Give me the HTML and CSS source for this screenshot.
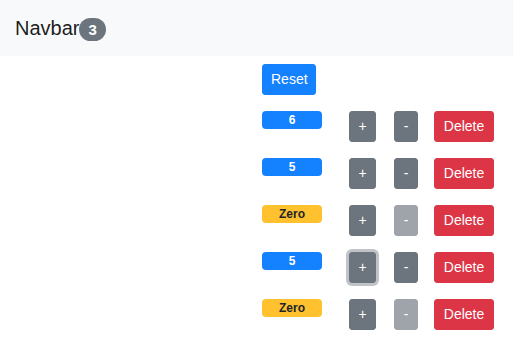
FILE: index.html
```html
<!DOCTYPE html>
<html lang="en">
  <head>
    <meta charset="UTF-8" />
    <meta name="viewport" content="width=device-width, initial-scale=1.0" />
    <title>Counters</title>
    <link rel="stylesheet" href="styles.css">
  </head>
  <body>
    <nav class="navbar">
      <a class="navbar-brand" href="#">Navbar<span class="pill">3</span></a>
    </nav>

    <main class="counters">
      <button class="btn btn-primary btn-reset">Reset</button>

      <div class="counter">
        <div class="counter-value"><span class="badge badge-primary">6</span></div>
        <button class="btn btn-secondary btn-inc">+</button>
        <button class="btn btn-secondary btn-dec">-</button>
        <button class="btn btn-danger btn-del">Delete</button>
      </div>
      <div class="counter">
        <div class="counter-value"><span class="badge badge-primary">5</span></div>
        <button class="btn btn-secondary btn-inc">+</button>
        <button class="btn btn-secondary btn-dec">-</button>
        <button class="btn btn-danger btn-del">Delete</button>
      </div>
      <div class="counter">
        <div class="counter-value"><span class="badge badge-warning">Zero</span></div>
        <button class="btn btn-secondary btn-inc">+</button>
        <button class="btn btn-secondary btn-dec" disabled>-</button>
        <button class="btn btn-danger btn-del">Delete</button>
      </div>
      <div class="counter">
        <div class="counter-value"><span class="badge badge-primary">5</span></div>
        <button class="btn btn-secondary btn-inc focus">+</button>
        <button class="btn btn-secondary btn-dec">-</button>
        <button class="btn btn-danger btn-del">Delete</button>
      </div>
      <div class="counter">
        <div class="counter-value"><span class="badge badge-warning">Zero</span></div>
        <button class="btn btn-secondary btn-inc">+</button>
        <button class="btn btn-secondary btn-dec" disabled>-</button>
        <button class="btn btn-danger btn-del">Delete</button>
      </div>
    </main>
  </body>
</html>
```

FILE: styles.css
```css
:root {
  --primary: #1481ff;
  --secondary: #6c757d;
  --danger: #dc3545;
  --warning: #ffc22e;
  --dark: #212529;
  --light-bg: #f8f9fa;
}
body {
  font-family: "Liberation Sans", Arial, sans-serif;
  margin: 0;
  color: var(--dark);
  background: white;
}
.navbar {
  background: var(--light-bg);
  padding: 8px 15px;
  display: flex;
  align-items: center;
}
.navbar-brand {
  font-size: 20px;
  line-height: 30px;
  padding: 5px 0;
  color: rgba(0, 0, 0, 0.9);
  text-decoration: none;
  display: inline-flex;
  align-items: center;
}
.pill {
  display: inline-block;
  background: var(--secondary);
  color: white;
  font-size: 15px;
  font-weight: 700;
  line-height: 1;
  padding: 4px 9px;
  border-radius: 10rem;
  margin-top: 2px;
}
.counters {
  margin-left: 254px;
}
.btn {
  font-family: inherit;
  font-size: 14px;
  line-height: 21px;
  padding: 4px 8px;
  border: 1px solid transparent;
  border-radius: 3px;
  color: white;
  margin: 8px;
  cursor: pointer;
}
.btn-primary {
  background: var(--primary);
  border-color: var(--primary);
}
.btn-secondary {
  background: var(--secondary);
  border-color: var(--secondary);
}
.btn-danger {
  background: var(--danger);
  border-color: var(--danger);
}
.btn:disabled {
  opacity: 0.65;
  cursor: default;
}
.btn.focus {
  box-shadow: 0 0 0 3px rgba(130, 138, 145, 0.5);
}
.btn-reset {
  width: 54px;
}
.counter {
  display: flex;
  align-items: flex-start;
}
.counter-value {
  width: 87px;
}
.badge {
  display: block;
  width: 60px;
  box-sizing: border-box;
  margin: 8px;
  padding: 3px 0;
  font-size: 12px;
  font-weight: 700;
  line-height: 12px;
  text-align: center;
  border-radius: 4px;
}
.badge-primary {
  background: var(--primary);
  color: white;
}
.badge-warning {
  background: var(--warning);
  color: var(--dark);
}
.btn-inc {
  width: 27px;
  padding: 4px 0;
  margin-right: 10px;
}
.btn-dec {
  width: 24px;
  padding: 4px 0;
  margin-left: 8px;
}
.btn-del {
  width: 60px;
  padding: 4px 0;
}
```
